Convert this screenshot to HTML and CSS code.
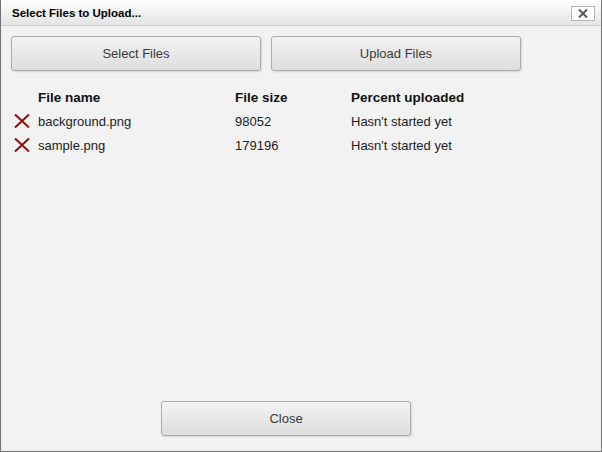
FILE: index.html
```html
<!DOCTYPE html>
<html>
<head>
<meta charset="utf-8">
<link rel="stylesheet" href="styles.css">
</head>
<body>
<div class="window">
  <div class="titlebar">
    <span class="title">Select Files to Upload...</span>
    <button class="xbtn" aria-label="Close">
      <svg width="10" height="9" viewBox="0 0 10 9"><path d="M1 0.5 L9 8.5 M9 0.5 L1 8.5" stroke="#555" stroke-width="2"/></svg>
    </button>
  </div>
  <div class="content">
    <div class="actions">
      <button class="btn">Select Files</button>
      <button class="btn">Upload Files</button>
    </div>
    <div class="table">
      <div class="cell"></div>
      <div class="cell head">File name</div>
      <div class="cell head">File size</div>
      <div class="cell head">Percent uploaded</div>

      <div class="cell icon"><svg width="16" height="14" viewBox="0 0 16 14"><path d="M1 0.5 L15 13.5 M15 0.5 L1 13.5" stroke="#8a1010" stroke-width="2"/></svg></div>
      <div class="cell">background.png</div>
      <div class="cell">98052</div>
      <div class="cell">Hasn't started yet</div>

      <div class="cell icon"><svg width="16" height="14" viewBox="0 0 16 14"><path d="M1 0.5 L15 13.5 M15 0.5 L1 13.5" stroke="#8a1010" stroke-width="2"/></svg></div>
      <div class="cell">sample.png</div>
      <div class="cell">179196</div>
      <div class="cell">Hasn't started yet</div>
    </div>
    <div class="footer">
      <button class="btn">Close</button>
    </div>
  </div>
</div>
</body>
</html>
```
FILE: styles.css
```css
html, body {
  margin: 0;
  padding: 0;
}
body {
  font-family: "Liberation Sans", Arial, sans-serif;
  background: #f2f2f2;
}
.window {
  width: 602px;
  height: 452px;
  box-sizing: border-box;
  border: 1px solid #737373;
  border-top: none;
  background: #f2f2f2;
  display: flex;
  flex-direction: column;
}
.titlebar {
  height: 26px;
  box-sizing: border-box;
  border-bottom: 1px solid #cfcfcf;
  background: linear-gradient(#ffffff, #e4e4e4);
  display: flex;
  align-items: center;
  justify-content: space-between;
  padding: 0 6px 0 11px;
}
.title {
  font-size: 11.5px;
  font-weight: bold;
  color: #000;
}
.xbtn {
  width: 24px;
  height: 15px;
  padding: 0;
  margin-top: 1px;
  border: 1px solid #b5b5b5;
  background: #fff;
  display: flex;
  align-items: center;
  justify-content: center;
}
.content {
  flex: 1;
  display: flex;
  flex-direction: column;
  padding: 10px 10px 15px 10px;
}
.actions {
  display: flex;
  gap: 10px;
}
.btn {
  width: 250px;
  height: 35px;
  box-sizing: border-box;
  border: 1px solid #aaaaaa;
  border-radius: 3px;
  background: linear-gradient(#f3f3f3, #dedede);
  box-shadow: 1px 1px 2px rgba(0,0,0,0.12);
  font-family: "Liberation Sans", Arial, sans-serif;
  font-size: 13px;
  color: #3a3a3a;
  padding: 0;
}
.table {
  margin-top: 14px;
  display: grid;
  grid-template-columns: 27px 197px 116px auto;
  grid-auto-rows: 24px;
  font-size: 13px;
  color: #222;
}
.cell {
  display: flex;
  align-items: center;
}
.head {
  font-weight: bold;
  font-size: 13.5px;
  color: #111;
}
.icon {
  padding-left: 3px;
}
.footer {
  margin-top: auto;
  padding-left: 150px;
}
```
